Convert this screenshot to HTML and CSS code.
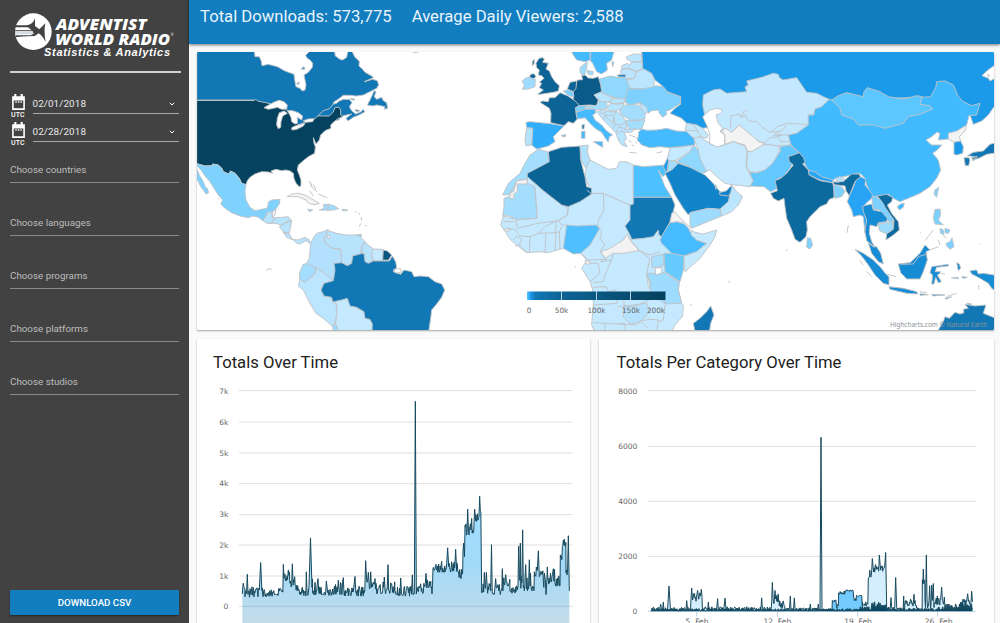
FILE: index.html
```html
<!DOCTYPE html>
<html lang="en">
<head>
<meta charset="utf-8">
<title>Statistics &amp; Analytics</title>
<link rel="stylesheet" href="styles.css">
</head>
<body>
<div class="app">
<aside class="sidebar">
  <svg class="logo" viewBox="0 0 510 180">
    <circle cx="70" cy="95" r="55" fill="#fff"/>
    <path d="M15 76H50Q70 73 75 54V78L88 88 106 70Q101 95 107 126 98 108 86 100L74 108Q60 108 18 111V106H62L74 100H15V90H64L54 82H15Z" fill="#424242"/>
    <path d="M15 92H64Q76 95 64 103H16Z" fill="#d5dce2"/>
    <text x="138" y="89" class="brand" textLength="272" lengthAdjust="spacingAndGlyphs">ADVENTIST</text>
    <text x="136" y="134" class="brand" textLength="344" lengthAdjust="spacingAndGlyphs">WORLD RADIO</text>
    <text x="482" y="107" class="reg">®</text>
    <text x="102" y="169" class="tag" textLength="378" lengthAdjust="spacing">Statistics &amp; Analytics</text>
  </svg>
  <div class="rule"></div>
  <div class="dates">
    <div class="date"><div class="cal"><svg viewBox="0 0 14 16"><path d="M3 0h2v2h4V0h2v2h2v13H1V2h2zM2.5 6v7.5h9V6z" fill="#fff" fill-rule="evenodd"/><path d="M4 7.5h1.300M6.400 7.500h1.300M8.800 7.500h1.300" stroke="#fff" stroke-width="1.300"/></svg><span>UTC</span></div><div class="field">02/01/2018<svg class="chev" viewBox="0 0 6 4"><path d="M.8.8 3 3 5.200.8" fill="none" stroke="#fff"/></svg></div></div>
    <div class="date"><div class="cal"><svg viewBox="0 0 14 16"><path d="M3 0h2v2h4V0h2v2h2v13H1V2h2zM2.5 6v7.5h9V6z" fill="#fff" fill-rule="evenodd"/><path d="M4 7.5h1.300M6.400 7.500h1.300M8.800 7.500h1.300" stroke="#fff" stroke-width="1.300"/></svg><span>UTC</span></div><div class="field">02/28/2018<svg class="chev" viewBox="0 0 6 4"><path d="M.8.8 3 3 5.200.8" fill="none" stroke="#fff"/></svg></div></div>
  </div>
  <div class="filters">
    <div class="filter">Choose countries</div>
    <div class="filter">Choose languages</div>
    <div class="filter">Choose programs</div>
    <div class="filter">Choose platforms</div>
    <div class="filter">Choose studios</div>
  </div>
  <button class="download">DOWNLOAD CSV</button>
</aside>
<main class="main">
  <header class="topbar"><span class="t1">Total Downloads: 573,775</span><span class="t2">Average Daily Viewers: 2,588</span></header>
  <div class="content">
    <section class="card map">
      <svg class="world" viewBox="197 52 797 278">
        <defs><linearGradient id="scale"><stop offset="0" stop-color="#5cc8ff"/><stop offset=".025" stop-color="#1c9bec"/><stop offset=".06" stop-color="#1278b5"/><stop offset=".25" stop-color="#0d6496"/><stop offset="1" stop-color="#04405c"/></linearGradient></defs>
        <!-- North America -->
        <g class="land" transform="translate(190 40) scale(.33333)">
          <path fill="#1278b5" d="M20 30H193L195 50 208 50 214 64 216 77 235 73 262 80 285 93 312 103 315 125 318 140 330 145 337 153 345 150 348 135 342 105 355 97 367 82 368 70 360 60 350 53 347 46 356 37V30H433L436 48 450 58 458 60 470 52 474 30H484L495 52 508 64 507 78 518 88 525 97 545 108 550 113 523 125 548 118 562 122 566 135 560 145 540 155 520 165 500 168 480 166 460 166 447 176 432 186 429 192 440 190 446 184 460 178 478 178 486 188 478 200 485 212 497 222 512 216 520 208 524 216 505 226 490 232 474 243 468 235 485 222 465 226 458 228 445 240 300 270 245 200 193 181H20Z"/>
          <path fill="#04425f" d="M20 181H193L197 178 205 184 228 188 245 193 262 195 300 215 325 255 345 246 372 238 384 228 418 228 430 216 434 204 446 201 452 210 452 225 458 230 445 235 430 247 422 255 423 265 405 272 392 285 388 300 378 312 370 293 372 310 376 320 374 340 355 350 340 362 325 375 322 390 328 405 333 420 333 437 328 440 318 430 312 415 310 400 300 393 288 390 275 392 258 388 243 393 248 400 235 396 215 395 195 402 180 412 172 422 168 434 155 430 148 415 135 400 122 393 115 402 100 395 96 386 85 375 68 372 66 377 45 378 20 371Z"/>
          <path class="none" d="M383 228L400 212 418 206 432 190M20 181H193"/>
          <path class="sea" d="M222 203L240 193 255 185 268 181 282 185 292 195 290 207 275 208 262 202 250 205 235 208ZM268 218L283 213 292 220 278 228 273 245 272 262 265 266 260 255 262 235ZM292 212L308 212 325 218 338 228 335 240 327 235 322 232 322 250 315 252 305 245 303 232 298 222ZM305 263L318 257 335 252 345 250 340 258 320 268 306 270ZM340 242L355 237 372 236 368 245 345 247Z"/>
          <path fill="#1278b5" d="M552 152L558 155 553 170 560 178 575 172 580 182 590 188 593 205 582 208 585 200 575 198 560 195 548 198 532 195 540 180 548 163ZM495 208L510 212 500 216ZM480 175L495 178 490 181ZM333 87L342 80 345 88ZM320 130L328 126 325 134Z"/>
          <path class="none" d="M668 37H684M358 424L365 440M370 433L378 448M359 452L370 468"/>
        </g>
        <!-- Central and South America -->
        <g class="land" transform="translate(190 180) scale(.33333)">
          <path fill="#7fd2fe" d="M20 -49L45 -42 66 -43 68 -48 85 -45 96 -34 100 -25 115 -18 122 -27 135 -20 148 -5 155 10 168 14 165 35 168 60 180 82 195 92 215 88 232 84 236 65 245 60 270 58 268 72 258 86 248 95 232 97 228 108 218 122 205 112 190 108 175 113 150 108 125 98 105 85 92 72 98 60 85 45 72 25 60 5 45 -12 35 -28 20 -43Z"/>
          <path fill="#7fd2fe" d="M20 -35L28 -15 40 5 46 20 52 26 56 38 48 42 40 30 32 20 25 5 20 -5Z"/>
          <path fill="#b8e3fc" d="M218 122L230 107 232 97 247 95 246 110 255 115 243 130 230 130ZM243 130L255 113 275 112 295 110 305 122 290 125 275 138 265 132 250 130ZM305 122L300 150 298 160 280 156 268 140 278 133ZM280 157L298 162 308 180 290 172ZM308 178L325 180 345 172 358 180 362 192 348 182 330 192 320 190Z"/>
          <path fill="#f3f3f3" d="M247 95L258 88 255 105 247 112ZM292 50L305 42 325 40 345 45 362 55 388 70 375 74 355 70 348 60 325 50 305 50Z"/>
          <path fill="#9ddcff" d="M400 73L415 73 413 91 388 90 402 85ZM415 73L432 77 446 86 430 90 413 91ZM352 88L368 90 360 95ZM456 88L473 89 470 93 457 92ZM499 164L514 163 514 170 505 168Z"/>
          <path class="none" d="M360 5L368 25 382 35M385 42L412 54M495 93L500 98M507 99L510 105M514 112V122M512 130L508 140M524 137H530M228 272L235 266 245 268M84 55L88 58"/>
          <path fill="#b3e1fd" d="M362 190L372 170 380 160 400 155 415 148 412 158 403 175 408 192 430 205 452 207 455 230 455 250 432 250 437 270 430 302 410 285 390 272 378 263 348 252 358 235 360 210Z"/>
          <path fill="#b8e3fd" d="M403 175L412 158 418 152 425 155 440 160 470 165 500 165 512 172 525 185 515 200 517 215 510 222 488 228 488 240 485 250 472 257 455 248 455 230 452 207 430 205 408 192ZM525 185L535 195 550 207 545 225 550 240 535 250 525 245 522 220 512 220 515 200Z"/>
          <path class="sea" d="M413 165L419 167 418 176 413 175Z"/>
          <path fill="#c5e9ff" d="M550 207L580 208 578 225 580 242 550 242 545 225Z"/>
          <path fill="#a3deff" d="M340 252L355 252 378 263 375 280 345 308 330 300 328 280Z"/>
          <path fill="#bce6ff" d="M330 298L345 308 375 282 380 264 410 285 430 302 402 310 393 330 402 348 425 352 428 365 438 370 440 400 436 425 428 440 400 415 378 400 360 370 340 330 325 318Z"/>
          <path fill="#c5e9ff" d="M428 366L472 355 480 375 522 395 525 415 540 418 547 432 546 455H445L436 430 440 410 440 370Z"/>
          <path fill="#9ddcff" d="M428 436L438 433 445 455H430Z"/>
          <path fill="#1178b5" d="M488 228L510 222 522 220 525 245 535 250 550 243 580 243 598 243 607 228 617 245 620 262 610 275 632 283 642 270 665 275 672 290 690 288 715 290 735 305 755 312 764 330 755 352 740 372 725 390 722 415 716 455H546L547 432 540 418 525 415 522 395 500 382 480 378 472 355 455 360 428 366 425 352 402 348 393 330 402 310 430 302 435 270 432 250 455 248 472 257 485 250Z"/>
          <path fill="#0b5680" d="M580 210L592 213 605 225 595 241 578 240Z"/><path class="none" d="M610 268L632 266 634 276 620 280 612 275Z"/>
        </g>
        <!-- Europe -->
        <g class="land" transform="translate(490 45) scale(.33333)">
          <path fill="#0c6396" d="M147 40L158 38 163 42 158 52 175 55 168 72 178 78 185 95 195 110 208 122 205 138 190 142 170 145 150 148 143 148 160 135 148 128 155 115 148 112 162 100 155 92 145 90 148 75 140 68 138 55ZM122 88L132 86 138 95 130 101 118 97ZM127 48L133 44 132 58 127 62Z"/>
          <path fill="#9ddcff" d="M105 100L118 97 130 101 136 103 135 125 115 132 97 133 103 122 97 108Z"/>
          <path fill="#46baff" d="M242 15H302V45L285 50 260 45 250 30ZM300 15H373L365 45 350 55 352 75 335 87 320 80 308 55 300 45ZM366 50L372 52 368 65Z"/>
          <path fill="#9ddcff" d="M270 68L285 55 292 52 290 70 284 90 274 88 270 80ZM292 76L310 80 308 90 294 88Z"/>
          <path fill="#bce6ff" d="M410 35L430 27 455 27 455 50 425 50 410 42ZM395 62L412 55 418 62 425 50 457 52 460 70 440 78 415 70 395 72ZM392 75L415 70 440 80 432 100 405 102 393 88ZM440 80L460 72 485 85 495 105 490 128 455 132 412 128 410 105 432 100Z"/>
          <path fill="#1284c9" d="M382 90L405 88 408 96 385 96Z"/>
          <path fill="#90d8fe" d="M328 102L360 93 385 97 408 98 418 125 415 150 405 162 385 160 355 152 335 142Z"/>
          <path fill="#0a5a8a" d="M275 92L285 90 295 99 310 100 325 95 332 120 335 140 312 150 325 165 320 182 300 180 262 182 250 165 250 140 258 118 262 105 278 104Z"/>
          <path fill="#0c6396" d="M240 112L260 108 258 130 250 140 232 132ZM210 143L232 152 252 165 268 180 258 190 258 205 262 222 250 235 235 230 222 242 182 233 183 205 178 190 150 172 158 168 175 170 178 158 195 158ZM276 240L283 238 282 252 276 252Z"/>
          <path fill="#7ed1fe" d="M220 138L235 134 250 142 252 155 235 152ZM256 188L268 182 285 182 288 192 270 200 258 200Z"/>
          <path fill="#30adfb" d="M108 232L120 230 180 236 222 243 205 260 190 275 195 290 175 303 150 310 140 312 125 300 128 250 110 248ZM213 272L228 269 224 276Z"/>
          <path fill="#b5e3fe" d="M110 248L128 250 125 300 108 303 105 285Z"/>
          <path fill="#a3deff" d="M285 184L318 182 330 168 350 172 352 190 320 195 295 190ZM400 182L415 178 445 180 465 205 465 222 425 228 395 210 388 198ZM465 225L455 252 418 255 406 226Z"/>
          <path fill="#46baff" d="M258 203L270 198 290 192 315 193 318 203 308 210 315 225 335 240 350 258 368 270 358 275 355 292 345 278 335 262 315 250 300 235 285 218 262 222ZM310 290L338 290 338 307ZM274 260L285 258 285 280 274 280Z"/>
          <path fill="#b8e5ff" d="M312 150L332 142 355 152 372 160 355 172 330 168ZM355 172L372 160 405 162 402 174 380 178ZM350 190L360 176 402 174 400 185 380 198 358 198ZM448 175L470 182 475 200 465 207 455 190ZM320 200L345 194 358 200 380 200 395 210 408 230 410 255 435 250 425 262 402 262 410 280 402 290 412 305 395 300 385 285 378 265 365 250 345 230 330 212Z"/>
          <path class="none" d="M330 205H345L350 196M340 225L345 210 370 212 378 200M345 212L368 235 372 215 375 238 395 240 408 230M375 238L368 250M378 265L385 245 400 250 410 255M385 262L398 258 402 265M418 322L440 324M500 324L518 320"/>
          <path fill="#7ed1fe" d="M408 152L415 130 450 132 480 128 497 122 520 125 532 140 572 155 572 175 555 185 540 195 528 198 530 208 518 217 508 205 505 195 485 197 475 205 468 185 450 173 420 180 405 172Z"/>
          <path fill="#46baff" d="M445 262L455 252 470 256 500 255 530 250 560 258 600 260 612 280 615 300 575 305 540 308 510 305 480 308 455 300 442 285 446 268Z"/>
          <path class="none" d="M418 270L440 278M415 285L425 292M425 300L432 302M437 290L440 296"/>
        </g>
        <!-- Africa and the Middle East -->
        <g class="land" transform="translate(490 190) scale(.33333)">
          <path fill="#c5e9ff" d="M142 85L215 45 305 10 340 10 420 45 430 80 520 130 582 198 568 275 565 300 575 340 580 345 578 378 555 405 545 425H315L305 405 310 340 308 300 300 275 278 240 275 235 290 212 285 200 272 190 220 175 195 182 175 188 150 185 110 188 80 165 62 150 48 128 32 105 40 78 80 88Z"/>
          <path fill="#a3deff" d="M145 -122L172 -115 178 -85 150 -68 112 -50V-32L80 -28 75 -15 55 15 38 15 55 -20 90 -50 105 -80 120 -105ZM42 25L58 20 62 5 80 -18 112 -30 135 -10 142 85 80 88 50 75 38 78 42 50Z"/>
          <path fill="#f3f3f3" d="M80 -28L112 -32V-18H82V5L72 12V25L58 26 62 8 70 5Z"/>
          <path fill="#c5e9ff" d="M112 -40L160 2 215 45 235 52 232 75 205 92 142 100 82 115 78 90 142 85 135 -10 112 -20ZM288 -65L300 -90 320 -80 355 -62 380 -65 388 -85 410 -85 430 -75V42L420 45 340 10 305 10 285 -40Z"/>
          <path fill="#0b6496" d="M175 -115L215 -128 270 -132 272 -90 285 -40 290 -10 305 -5 305 12 270 35 235 50 215 45 160 2 112 -40V-50L150 -70 178 -85Z"/>
          <path fill="#b0e1fe" d="M270 -132L295 -135 292 -115 300 -90 288 -65 275 -85Z"/>
          <path fill="#4dc0ff" d="M430 -75L460 -70 500 -73 525 -75 528 -48 518 -40 505 -60 525 -10 545 22H430Z"/>
          <path fill="#1178b5" d="M430 22H545L555 45 548 70 540 95 530 115 515 140 507 135 505 120 490 140 460 145 425 148 420 135 405 108 420 90V45L430 42Z"/>
          <path fill="#46bbff" d="M540 98L560 95 590 105 600 125 620 150 650 160 620 185 580 198 545 190 515 160 510 150 520 130Z"/>
          <path fill="#c5e9ff" d="M603 120L615 127 640 132 680 120 675 140 660 165 630 205 585 245 580 200 620 185 650 160 620 150 603 135Z"/>
          <path fill="#f3f3f3" d="M540 98L545 70 555 65 568 82 602 113 598 118 580 98 560 95ZM332 185L360 175 400 150 412 132 420 150 448 182 400 190 370 190 345 205ZM40 118L60 115 58 122 45 124ZM285 212L300 214 300 222 287 222Z"/>
          <path fill="#67caff" d="M522 190L545 190 582 198 580 240 570 275 525 245Z"/>
          <path fill="#a8dffe" d="M485 200L520 192 522 225 505 232 485 232Z"/>
          <path fill="#9ddcff" d="M490 250L525 248 568 278 565 300 575 340 525 342 490 315 478 290 472 250Z"/>
          <path fill="#b5e2fe" d="M400 350L430 345 470 340 480 365 450 395 420 402 400 380Z"/>
          <path class="sea" d="M495 235L515 232 515 248 498 255ZM470 250L476 270 482 300 474 285Z"/>
          <path fill="#50bfff" d="M220 175L230 105 260 108 320 105 328 118 300 165 272 190 250 192Z"/>
          <path class="none" d="M235 50L232 75 205 92 215 105 230 105M340 10L342 60 325 90 323 105 335 125 330 145 345 165 330 182 345 205M145 130L165 110 200 92M145 130L195 128 200 95M195 128L208 125 215 110M208 125L210 178M165 188L168 130M198 128L195 182M118 188L120 140 145 130M120 140L90 138 75 118 50 115M70 150L80 138 95 148 88 165 75 168M90 165L110 188M272 190L290 210 350 208M300 220H325L330 250 300 275M330 215L365 210 370 190M365 210L345 255 340 275 310 278M310 292L350 290 355 305 378 300 382 340 310 345M448 182L480 205 470 250 485 285M380 320H402V370M382 350H400M400 345L430 350 478 330 475 305M310 398L385 402 405 398M345 420V402M405 402V420M450 393L475 415M385 402L440 405 455 392 480 388 505 390 500 420M525 342L520 320M525 345L520 390 505 395M420 150L448 182 480 195 510 185M290 0L305 12M42 95H75"/>
          <path fill="#c5e9ff" d="M540 -127L575 -129 612 -135 600 -115 560 -90 540 -85 532 -95Z"/>
          <path fill="#90d8fe" d="M612 -135L640 -100 650 -55 630 -47 600 -70 560 -85 600 -115Z"/>
          <path fill="#a3deff" d="M538 -88L560 -85 565 -75 545 -60 530 -50Z"/>
          <path fill="#1b9aea" d="M532 -95L536 -88 530 -50 520 -70Z"/>
          <path fill="#1284c9" d="M525 -50L545 -60 565 -80 600 -68 645 -45 665 -25 678 -10 690 5 720 15 715 35 690 58 655 55 600 68 595 75 580 55 555 15 540 -20Z"/>
          <path fill="#1178b5" d="M662 348L672 375 662 400 658 425H615L610 400 630 385 650 365Z"/>
          <path class="none" d="M254 230H258M602 342L605 347M716 272L719 278"/>
        </g>
        <!-- Russia and northern Asia -->
        <g class="land" transform="translate(690 45) scale(.33333)">
          <path fill="#1b9aea" d="M-145 10H930V45L912 62 890 78 876 92 895 100 900 108 930 92V170L912 185 895 210 875 228 850 238 842 215 800 160 420 165 250 220 52 248 35 250 20 240 -10 235 -25 220 -60 205 -45 190 -28 178V155L-68 140 -80 125 -105 105 -115 85 -142 70Z"/>
          <path fill="#fff" d="M893 88L900 92 895 96Z"/>
          <path fill="#c4e9ff" d="M-10 235L20 240 38 250 55 270 50 280 30 275 12 280 0 270 -15 255Z"/>
          <path fill="#c4e9ff" d="M40 150L70 135 90 132 110 145 170 140 165 125 175 120 170 108 215 97 250 85 265 88 268 98 280 105 320 98 335 120 350 142 380 145 400 155 418 163 395 185 375 192 372 210 355 210 355 240 320 265 295 270 303 300 270 303 240 300 222 295 190 280 148 240 125 262 95 260 52 245 38 180Z"/>
          <path class="sea" d="M38 215L60 195 80 190 98 195 92 205 78 210 85 235 98 250 90 260 105 270 103 300 80 306 58 295 60 270 52 245Z"/>
          <path fill="#f3f3f3" d="M95 255L108 250 125 262 148 240 165 255 190 275 205 290 222 295 215 305 185 320 172 318 165 300 130 290 105 298 104 270Z"/>
          <path class="none" d="M122 250V212L152 208M165 208L175 228 200 230 215 245 240 262 262 245 290 235 352 238M245 262L275 258 290 240M248 270L270 272 300 268M222 295L240 278 265 275 272 290 298 290M-15 255L20 258 35 275M10 240L25 260M145 205L155 215 160 200 172 195M150 218L165 212M255 265L275 268 262 275"/>
          <path fill="#c5e9ff" d="M12 280L30 275 58 295 80 306 103 300 130 290 165 303 172 320 170 370 180 390 190 408 180 425 155 422 130 420 105 415 80 395 60 375 48 378 30 340 25 315ZM172 320L185 320 222 298 240 300 270 303 265 325 248 355 225 375 200 383 178 380 168 360Z"/>
          <path fill="#62c8ff" d="M178 382L200 384 225 375 248 355 270 320 272 305 300 300 330 325 312 345 300 370 280 395 262 402 262 430 242 440 222 425 180 423 190 408Z"/>
          <path fill="#41baff" d="M425 165L418 163 395 185 375 192 372 210 355 210 355 240 320 265 295 270 303 300 330 325 340 350 355 375 390 400 428 410 435 400 460 395 485 390 510 385 525 400 530 420 545 455 575 452 595 448 610 460 630 470 655 460 690 445 720 425 740 400 752 375 745 345 728 325 745 312 755 300 725 300 708 285 725 275 740 262 750 265 745 285 775 282 800 262 830 240 837 212 860 210 870 175 845 182 820 170 805 155 790 120 765 108 740 110 738 125 722 155 695 157Z"/>
          <path fill="#5cc6ff" d="M425 165L445 152 470 143 520 155 522 140 532 128 570 140 595 155 640 162 680 152 697 155 690 178 720 182 728 192 690 208 655 215 640 235 585 250 550 240 505 240 490 222 455 210 450 190Z"/>
          <path fill="#f3f3f3" d="M775 282L775 265 800 258 830 240 825 258 808 275 812 288 792 292Z"/>
          <path fill="#1b9aea" d="M792 292L812 288 820 305 818 325 800 330 792 328Z"/>
          <path fill="#1178b5" d="M832 332L850 322 880 318 900 298 930 290V322L890 328 870 338 850 345 855 335ZM822 338L836 338 840 345 836 362 826 362ZM845 338L862 334 850 348Z"/>
        </g>
        <!-- Southern Asia and Oceania -->
        <g class="land" transform="translate(690 150) scale(.33333)">
          <path fill="#1284c9" d="M88 128L110 122 125 105V125L115 138 90 135Z"/>
          <path fill="#bce6ff" d="M127 108L140 125 158 140 145 165 125 185 95 198 90 178 115 155 120 135Z"/>
          <path fill="#9ddcff" d="M0 188L55 175 90 178 95 198 60 212 5 235 0 225ZM74 104L80 106 78 118Z"/>
          <path fill="#0d6a9f" d="M295 20L310 15 328 8 340 22 345 35 338 42 355 60 358 75 390 92 428 98 432 115V143L418 148 410 162 390 170 360 200 350 215 352 240 348 260 330 277 315 268 305 240 290 205 285 170 282 145 265 153 250 145 242 130 262 122 255 92 272 85 290 70 310 45 298 35ZM430 95L445 97 465 90 485 72 508 72 512 82 495 95 488 112 478 138 468 122 465 108 432 104Z"/>
          <path fill="#27a4f5" d="M355 60L375 66 395 80 428 90V98L390 90 358 75ZM478 138L490 112 497 92 512 80 527 88 525 105 545 130 548 142 530 158 518 172 530 210 532 250 525 250 520 200 510 195 490 200 485 180 472 155Z"/>
          <path fill="#b5e3fe" d="M438 85L450 80 465 88 460 95 440 94Z"/>
          <path fill="#7ed1fe" d="M430 105L455 110 465 125 455 140 435 145ZM352 263L362 265 368 285 360 297 350 292ZM545 142L560 138 570 150 585 160 590 178 610 205 608 218 592 212 578 190 568 180 550 178ZM735 120L746 112 740 142 732 132ZM735 178L750 177 752 195 745 210 760 225 735 222 730 205ZM768 280L780 275 786 263 792 290 780 298 770 288ZM765 235L780 240 775 250 765 248ZM750 235L760 240 762 255 752 250Z"/>
          <path fill="#41baff" d="M622 170L632 162 643 160 640 172 628 180Z"/>
          <path fill="#168cd5" d="M518 168L545 162 550 180 575 185 592 205 590 215 565 218 560 230 540 225 538 250 545 275 555 292 530 272 525 245 530 210 520 185ZM535 278L550 290 560 290 572 310 580 342 565 335 545 310ZM495 298L520 310 550 330 570 350 590 375 597 380V405L580 400 555 375 535 345 515 318ZM597 410L640 415 680 425 683 432 650 430 600 418ZM625 342L660 338 690 310 705 285 720 300 708 305 712 330 700 365 690 387 650 387 632 368ZM725 350L775 343 775 348 740 352 735 365 752 365 748 372 742 375 754 395 745 398 737 382 732 402 725 402 728 375 720 368ZM840 362L860 360 865 372 880 370 912 375H930V432L905 415 895 400 870 385 845 372ZM800 338L808 342 812 355 805 362ZM690 431L715 434 690 436ZM725 433L765 435 730 438ZM765 445L785 440 768 448ZM785 383H805V386ZM815 380L832 382 820 385Z"/>
          <path fill="#9ddcff" d="M565 220L610 216 610 238 590 252 568 242Z"/>
          <path fill="#0d6a9f" d="M562 138L590 133 608 142 605 155 592 165 605 190 625 215 628 240 610 255 588 270 590 252 610 238 612 210 585 172 578 158Z"/>
          <path fill="#1178b5" d="M742 545L760 515 765 500 778 505 795 487 810 492 822 488 820 478 835 475 825 463 855 468 888 465 880 490 900 498 930 510V545ZM830 460L845 462 840 465Z"/>
          <path class="none" d="M632 343L670 342 685 320 712 312M705 272L730 240M720 300L745 290M475 225L471 248M510 332L520 345M530 365L545 380M588 372L618 380M770 440L800 430M866 405V418M745 270L750 285M760 260L770 262M288 301H292M118 395V398M868 282V285M690 249H693M755 370L765 372M690 425L710 428"/>
        </g>
        <rect x="527" y="291.500" width="138.500" height="8.500" fill="url(#scale)"/>
        <path d="M561.500 291V300M596.500 291V300M630.500 291V300" stroke="#b8d5e5" fill="none"/>
        <g class="axis small"><text x="529" y="313">0</text><text x="561.500" y="313">50k</text><text x="596.500" y="313">100k</text><text x="631" y="313">150k</text><text x="656" y="313">200k</text></g>
        <text x="890" y="326.500" class="credit" textLength="97" lengthAdjust="spacingAndGlyphs">Highcharts.com © Natural Earth</text>
      </svg>
    </section>
    <div class="charts">
      <section class="card chart"><h2>Totals Over Time</h2>
        <svg class="plot" viewBox="6 150 1179 714">
          <defs><linearGradient id="fade" x1="0" y1="480" x2="0" y2="900" gradientUnits="userSpaceOnUse"><stop offset="0" stop-color="#a4deff"/><stop offset=".5" stop-color="#a2daf9"/><stop offset="1" stop-color="#cbdce5"/></linearGradient></defs>
          <path class="grid" d="M132 167H1133M132 261H1133M132 354H1133M132 446H1133M132 539H1133M132 630H1133M132 723H1133M132 814H1133"/>
          <path id="total-fill" fill="url(#fade)"/><path class="grid over" d="M142 814H1123"/>
          <path id="total-line" class="series"/>
          <g class="axis left"><text x="100" y="178">7k</text><text x="100" y="270">6k</text><text x="100" y="362">5k</text><text x="100" y="454">4k</text><text x="100" y="547">3k</text><text x="100" y="638">2k</text><text x="100" y="731">1k</text><text x="100" y="823">0</text></g>
        </svg>
      </section>
      <section class="card chart"><h2>Totals Per Category Over Time</h2>
        <svg class="plot" viewBox="12 150 1185 714">
          <path class="grid" d="M158 167H1142M158 334H1142M158 499H1142M158 664H1142"/>
          <path d="M158 829H1142M305 829V845M547 829V845M788 829V845M1028 829V845" stroke="#bfd0e3" stroke-width="3" fill="none"/>
          <path id="cat-a-fill" fill="#d4eefe"/><path id="cat-a" class="series"/>
          <path id="cat-b-fill" fill="#73cbff"/><path id="cat-b" class="series"/>
          <path id="cat-c-fill" fill="#0b4560"/><path id="cat-c" class="series"/>
          <g class="axis left"><text x="127" y="178">8000</text><text x="127" y="343">6000</text><text x="127" y="507">4000</text><text x="127" y="672">2000</text><text x="127" y="838">0</text></g>
          <g class="axis mid"><text x="306" y="868" textLength="69">5. Feb</text><text x="547" y="868" textLength="83">12. Feb</text><text x="789" y="868" textLength="83">19. Feb</text><text x="1031" y="868" textLength="83">26. Feb</text></g>
        </svg>
      </section>
    </div>
  </div>
</main>
</div>
<script src="charts.js"></script>
</body>
</html>
```
FILE: charts.js
```js
// Builds an hourly series: bands are [from, to, low, high], peaks are [x, value, halfWidth].
function series(id, fillId, zero, unit, bottom, bands, peaks, seed) {
  var s = seed;
  function rnd() { s = (s * 16807) % 2147483647; return s / 2147483647; }
  var pts = [];
  bands.forEach(function (b) {
    for (var x = b[0]; x < b[1]; x += 1.5) {
      var r = rnd();
      pts.push([x, b[2] + (b[3] - b[2]) * Math.pow(r, 1.3)]);
    }
  });
  peaks.forEach(function (p) {
    pts = pts.filter(function (q) { return Math.abs(q[0] - p[0]) > p[2]; });
    pts.push([p[0], p[1]]);
  });
  pts.sort(function (a, b) { return a[0] - b[0]; });
  var d = 'M' + pts.map(function (p) { return p[0].toFixed(1) + ' ' + (zero - p[1] * unit).toFixed(1); }).join('L');
  document.getElementById(id).setAttribute('d', d);
  document.getElementById(fillId).setAttribute('d', d + 'L' + pts[pts.length - 1][0] + ' ' + bottom + 'L' + pts[0][0] + ' ' + bottom + 'Z');
}

series('total-line', 'total-fill', 814, 92.5, 870, [
  [142, 150, .4, .7], [150, 190, .28, .65], [190, 203, .45, .6], [203, 250, .3, .55], [250, 264, .42, .65],
  [264, 284, .8, 1.15], [284, 302, .6, 1.2], [302, 313, .5, .75], [313, 342, .33, .65], [342, 353, .6, .9], [353, 420, .35, .7],
  [420, 445, .38, .8], [445, 510, .33, .65], [510, 545, .55, .95], [545, 600, .4, .8], [600, 670, .33, .65],
  [670, 688, .4, .8], [688, 708, .6, 1.05], [708, 714, .4, .7], [714, 728, 1.15, 1.4], [728, 770, 1.1, 1.4], [770, 788, 1.1, 1.5],
  [788, 804, .9, 1.25], [804, 810, 1.6, 1.9], [810, 830, 2.3, 2.7], [830, 843, 2.35, 2.8], [843, 853, 2.75, 3], [853, 859, 3, 3.3],
  [860, 892, .42, .75], [892, 925, .38, .8], [925, 945, .65, .95], [945, 970, .42, .7], [970, 990, .5, 1],
  [990, 1018, .5, 1.1], [1018, 1045, .95, 1.3], [1045, 1062, .6, 1.1], [1062, 1080, .75, 1.2], [1080, 1096, .65, 1],
  [1096, 1102, 1.5, 1.8], [1102, 1113, 1.9, 2.15], [1113, 1123, 1, 1.4]
], [
  [145, .75, 1], [157, 1.04, 1], [197, 1.42, 3], [265, 1.36, 1], [280, 1.18, 1], [292, 1.38, 1], [334, 1.12, 1],
  [346.5, 2.22, 4], [369, .9, 1], [360, .78, 1], [394, .82, 1], [430, .85, 1], [445, .93, 1], [480, .97, 2], [512, 1.48, 1],
  [527, 1.12, 1], [520, 1.1, 1], [540, .9, 1], [579, 1.35, 1], [568, .95, 1], [617, .92, 1], [652, 1.02, 1], [658, .42, .5], [661, 6.65, 2], [664, .4, .5],
  [677, .73, 1], [693, 1.07, 1], [758, 1.9, 2], [740, 1.46, 1], [782, 1.85, 2], [806, 2.05, 1], [818, 3.15, 1.500], [830, 2.85, 1], [839, 3.15, 1.500],
  [854, 3.57, 1.500], [868, 1.1, 1], [874, 1.1, 1], [889.500, 2, 1.500], [922, 1.22, 1], [902, .9, 1], [932, 1.03, 1], [971, 1.95, 1], [976, 2.05, 1],
  [983, 2.48, 1.500], [1003, 1.51, 1], [992, 1.35, 1], [1030, 1.8, 1.500], [1053, .38, 1], [1057, 1.28, 1], [1075, 1.22, 1], [1108, 2.18, 1], [1120, 2.29, 2], [1123, .5, 1]
], 4127);

series('cat-a', 'cat-a-fill', 829, .0825, 829, [
  [168, 288, 20, 150], [288, 322, 350, 700], [322, 530, 20, 170], [530, 553, 250, 650], [553, 570, 100, 400],
  [570, 705, 20, 130], [705, 802, 20, 120], [802, 820, 200, 350], [820, 830, 1200, 1500], [830, 874, 1400, 1750],
  [875, 930, 30, 170], [930, 965, 180, 450], [965, 982, 30, 170], [982, 990, 1000, 1300], [990, 1018, 100, 500],
  [1018, 1050, 200, 600], [1050, 1095, 60, 280], [1095, 1133, 150, 450]
], [
  [197, 260, 1], [205, 340, 1], [222, 920, 3], [275, 390, 1], [290, 850, 1], [308, 760, 1], [319, 800, 1], [340, 340, 1], [368, 460, 1], [390, 480, 2],
  [500, 490, 1], [532, 1050, 1.500], [540, 760, 1], [586, 560, 1], [598, 490, 1], [646, 260, 1], [670, 260, 1], [675, 60, .5], [678, 6330, 2], [681, 60, .5],
  [832, 1920, 1], [853, 2050, 1], [872, 2140, 1.500], [888, 500, 1], [902, 1230, 1.500], [926, 560, 1], [957, 620, 1], [985, 1540, 1], [994, 2050, 1.500],
  [1004, 930, 1], [1010, 950, 1], [1015, 1010, 1], [1040, 880, 1], [1118, 640, 2], [1130, 730, 1]
], 991);

series('cat-b', 'cat-b-fill', 829, .0825, 829, [
  [705, 712, 40, 200], [712, 724, 330, 410], [724, 731, 100, 300], [731, 752, 620, 740], [752, 776, 730, 810],
  [776, 784, 380, 500], [784, 802, 540, 590], [802, 806, 40, 100]
], [], 77);

series('cat-c', 'cat-c-fill', 829, .0825, 829, [
  [168, 790, 15, 100], [790, 830, 40, 170], [830, 875, 120, 350], [875, 1030, 15, 120], [1030, 1095, 40, 170], [1095, 1133, 60, 380]
], [], 313);
```
FILE: styles.css
```css
* { box-sizing: border-box; }
body { margin: 0; font-family: Roboto, "Liberation Sans", sans-serif; background: #fafafa; overflow: hidden; }
.app { display: flex; height: 623px; overflow: hidden; }
.sidebar { width: 189px; flex: none; background: #424242; color: #fff; padding: 0 10px 8px; display: flex; flex-direction: column; }
.logo { width: 170px; height: 60px; display: block; flex: none; }
.brand { font: italic 800 47px "Open Sans", sans-serif; fill: #fff; }
.reg { font: 10px Roboto, sans-serif; fill: #fff; }
.tag { font: italic 700 33px "Liberation Sans", sans-serif; fill: #fff; }
.rule { height: 1.500px; background: #d0d0d0; margin: 11px -2px 0 0; flex: none; }
.dates { margin-top: 20px; display: flex; flex-direction: column; }
.date { display: flex; height: 28px; }
.cal { width: 22.500px; font-size: 7px; line-height: 8px; font-weight: 500; padding-left: 1px; }
.cal svg { display: block; width: 15px; height: 17px; margin: 1px 0 0 0; }
.cal span { display: block; margin-top: 0; letter-spacing: .1px; }
.field { flex: 1; height: 21px; border-bottom: 1px solid #a8a8a8; color: #e8e8e8; font-size: 9.900px; line-height: 20px; padding-top: 3px; letter-spacing: .1px; display: flex; justify-content: space-between; align-items: center; }
.chev { width: 6px; height: 4px; margin-right: 4px; }
.filters { margin-top: 7px; display: flex; flex-direction: column; gap: 26.200px; }
.filter { height: 27px; border-bottom: 1px solid #8a8a8a; color: #bdbdbd; font-size: 9.800px; line-height: 27px; letter-spacing: 0; }
.download { margin-top: auto; height: 25px; border: 0; border-radius: 1px; background: #127dbf; color: #fff; font: 500 9.700px Roboto, sans-serif; box-shadow: 0 1px 2px rgba(0,0,0,.4); }
.main { flex: 1; display: flex; flex-direction: column; min-width: 0; }
.topbar { height: 44px; flex: none; background: #127dbf; color: #e8f3fa; font-size: 16.670px; line-height: 33px; padding-left: 11px; display: flex; gap: 20px; box-shadow: 0 1px 3px rgba(0,0,0,.55); white-space: nowrap; }
.content { padding: 8px 6px 0 8px; display: flex; flex-direction: column; gap: 9px; }
.card { background: #fff; border-radius: 1px; box-shadow: 0 1px 2px rgba(0,0,0,.35); overflow: hidden; }
.map { height: 278px; flex: none; }
.world { display: block; width: 797px; height: 278px; }
.land path { stroke: #bfc3c6; stroke-width: 2.800; stroke-linejoin: round; }
.land .sea { fill: #fff; }
.land .none { fill: none; }
.axis text { font-family: "DejaVu Sans", sans-serif; fill: #666; font-size: 22.500px; }
.small text { font-size: 7.300px; text-anchor: middle; }
.left text { text-anchor: end; }
.mid text { text-anchor: middle; }
.credit { font: 7px "Noto Sans", sans-serif; fill: #8a9196; }
.charts { display: grid; grid-template-columns: 393px 395px; gap: 9px; }
.chart { height: 330px; }
.chart h2 { margin: 0; height: 46px; padding-left: 16px; font-size: 16.670px; font-weight: 400; line-height: 47px; color: #212121; }
.chart + .chart h2 { padding-left: 17.500px; }
.plot { display: block; width: 100%; height: 238px; }
.grid { fill: none; stroke: #dedede; stroke-width: 3; }
.over { stroke: #9bb9ca; stroke-width: 2; }
.series { fill: none; stroke: #174a5e; stroke-width: 3; stroke-linejoin: round; }
```
